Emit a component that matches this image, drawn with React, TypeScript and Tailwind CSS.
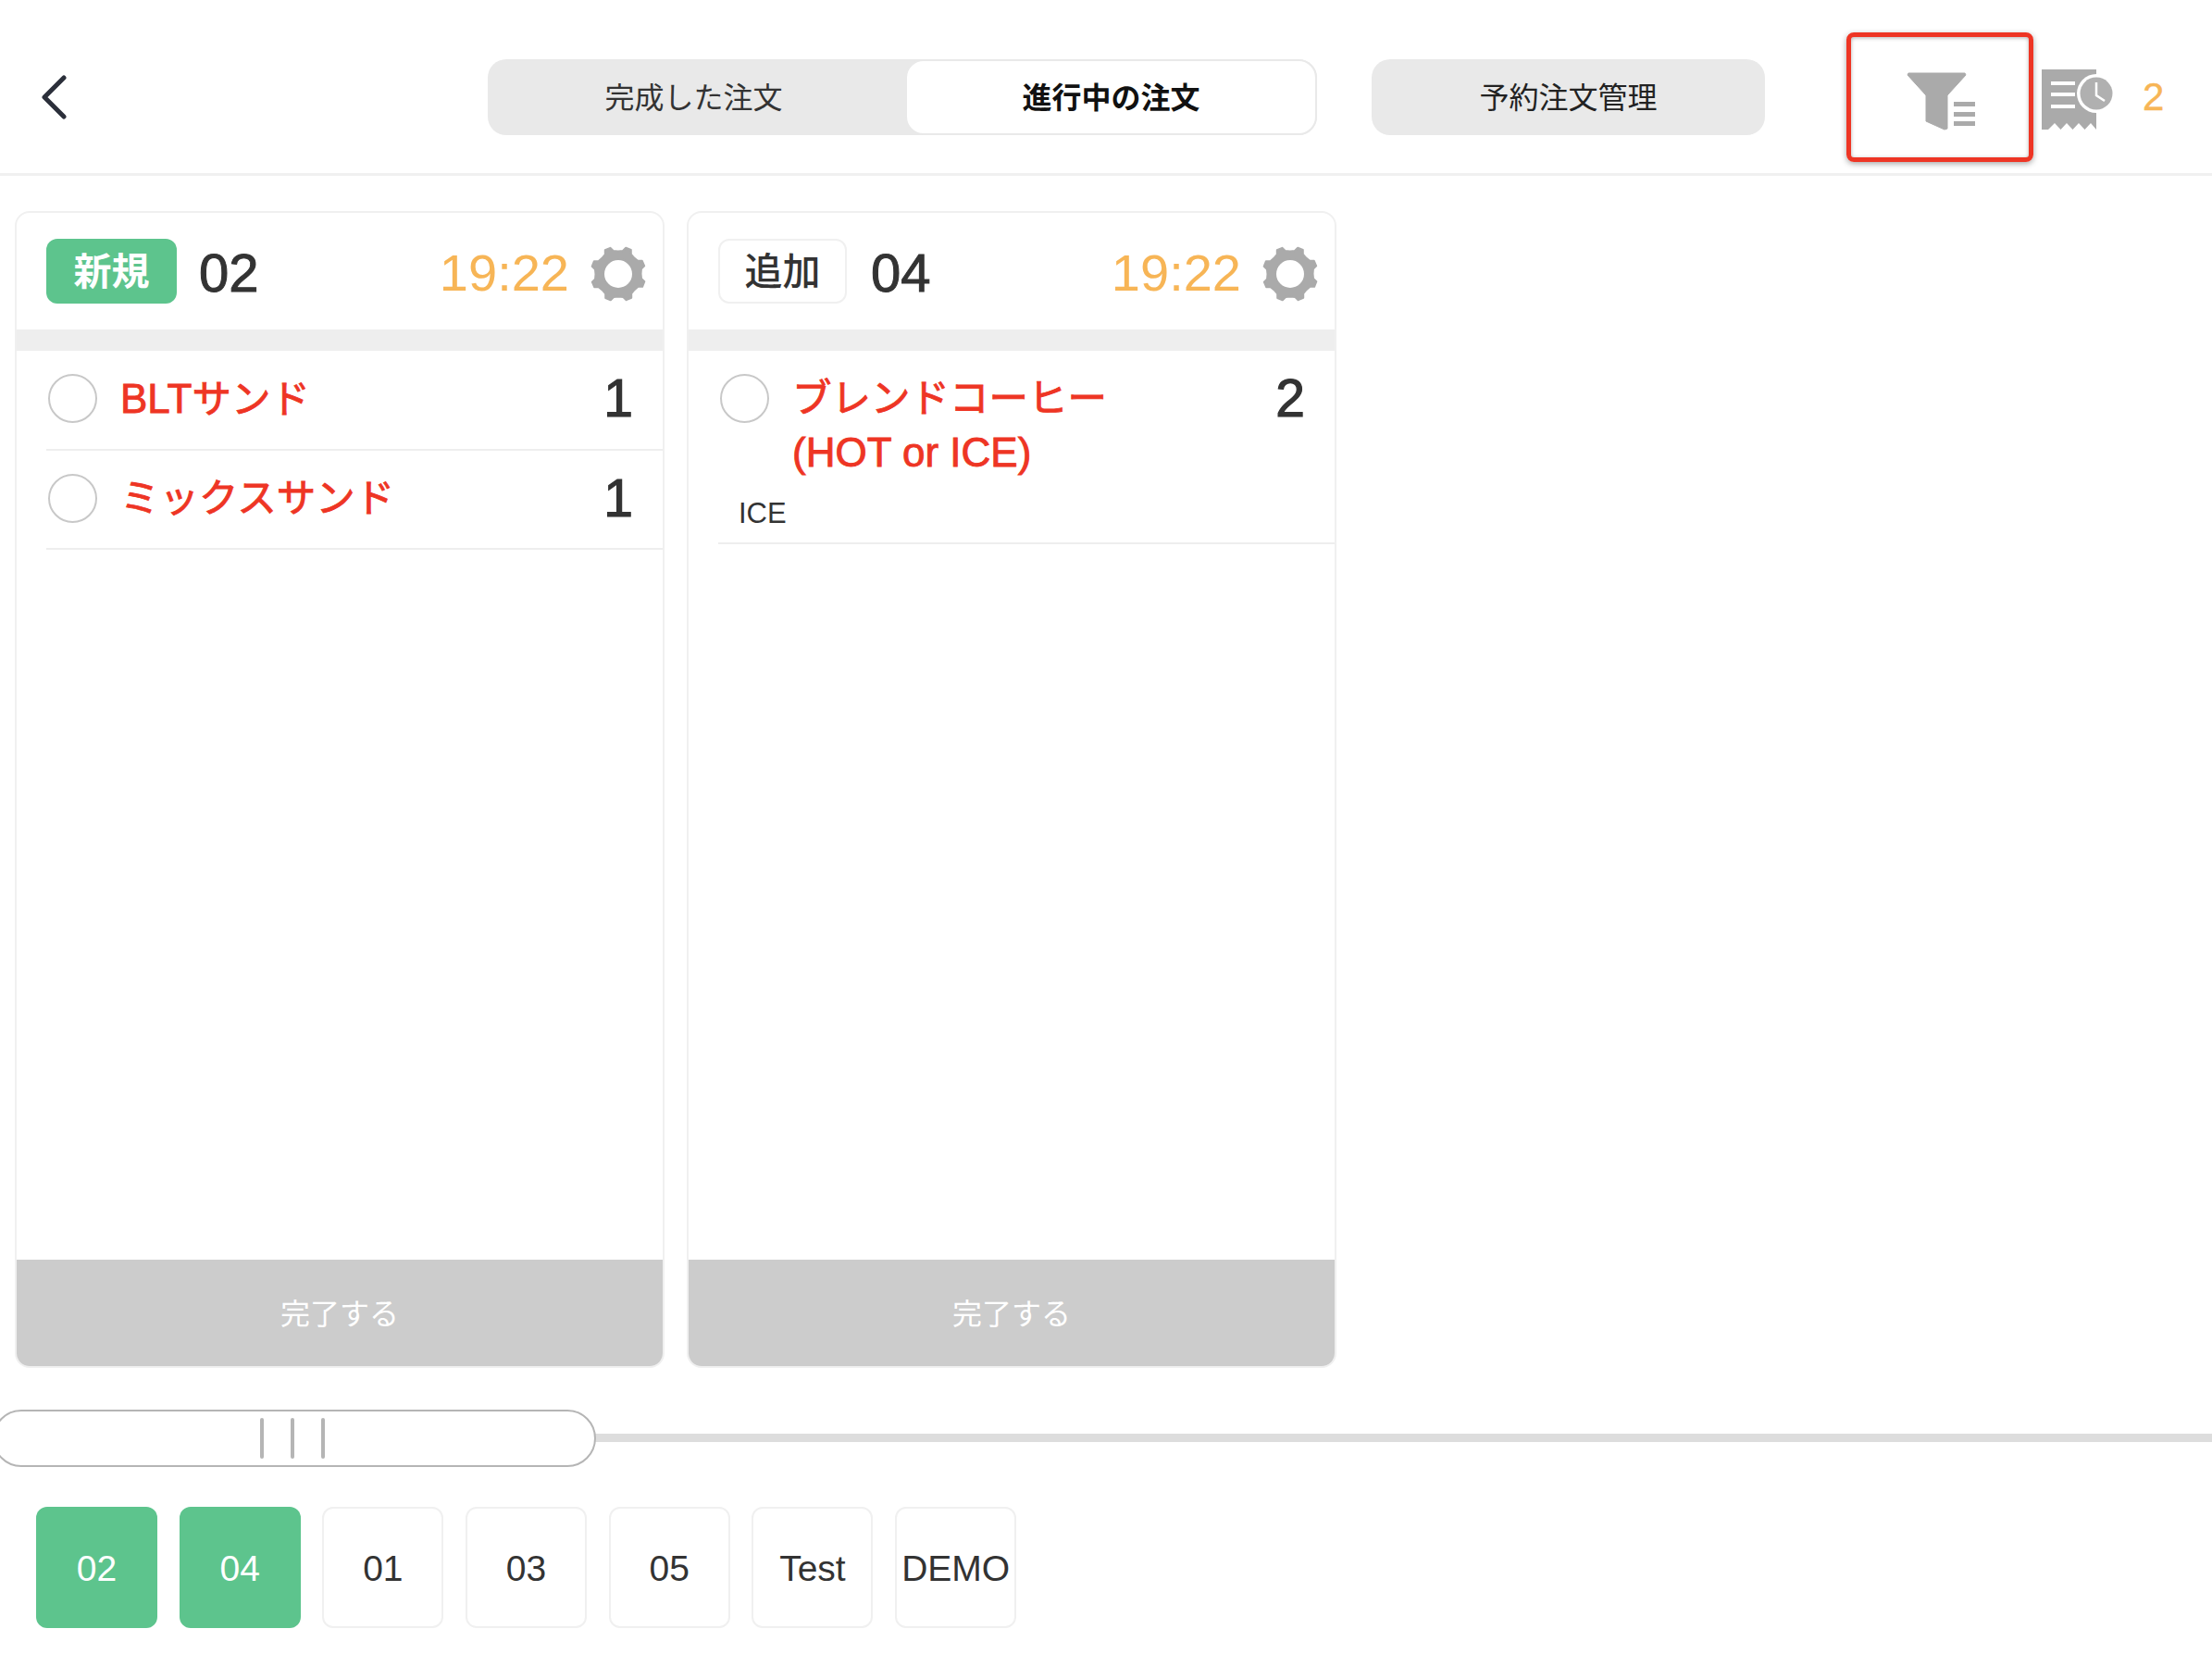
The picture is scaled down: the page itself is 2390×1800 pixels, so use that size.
const gearPath = (() => {
  // 8 teeth cog with a round hole, slightly turned like the original icon
  const cx = 31
  const cy = 31
  const pts: string[] = []
  for (let i = 0; i < 8; i++) {
    const a = ((i * 45 - 68) * Math.PI) / 180
    const step = (Math.PI * 2) / 8
    const list: [number, number][] = [
      [a - step * 0.5, 24.5],
      [a - step * 0.24, 25.5],
      [a - step * 0.13, 29.5],
      [a + step * 0.13, 29.5],
      [a + step * 0.24, 25.5],
    ]
    list.forEach(([t, r]) => {
      pts.push(`${(cx + Math.cos(t) * r).toFixed(2)} ${(cy + Math.sin(t) * r).toFixed(2)}`)
    })
  }
  return `M${pts.join('L')}Z M${cx + 16} ${cy}A16 16 0 1 0 ${cx - 16} ${cy}A16 16 0 1 0 ${cx + 16} ${cy}Z`
})()

function Gear() {
  return (
    <svg viewBox="0 0 62 62" className="w-[62px] h-[62px] mt-[6px] shrink-0">
      <path d={gearPath} fill="#aaaaaa" stroke="#aaaaaa" strokeWidth="2" strokeLinejoin="round" fillRule="evenodd" />
    </svg>
  )
}

function FunnelIcon() {
  return (
    <svg viewBox="0 0 74 63" className="w-[74px] h-[63px]">
      <path d="M2 1H63L64 3L44 25V61L41 62L21 53V25L1 3Z" fill="#aaaaaa" stroke="#aaaaaa" strokeWidth="1" strokeLinejoin="round" />
      <rect x="51" y="32" width="23" height="5" fill="#aaaaaa" />
      <rect x="51" y="43" width="23" height="5" fill="#aaaaaa" />
      <rect x="51" y="53" width="23" height="5" fill="#aaaaaa" />
    </svg>
  )
}

function ReceiptIcon() {
  return (
    <svg viewBox="0 0 78 65" className="w-[78px] h-[65px] shrink-0">
      <path d="M0 0H59V65L53 58L46.5 65L40 58L33.5 65L27 58L20.5 65L14 58L7 65H0Z" fill="#aaaaaa" />
      <rect x="10" y="13" width="26" height="4" fill="#ffffff" />
      <rect x="10" y="25" width="26" height="4" fill="#ffffff" />
      <rect x="10" y="38" width="26" height="4" fill="#ffffff" />
      <circle cx="59" cy="26" r="21" fill="#ffffff" />
      <circle cx="59" cy="26" r="17.5" fill="#b0b0b0" />
      <path d="M59 14V28L68 34" fill="none" stroke="#ffffff" strokeWidth="2.5" />
    </svg>
  )
}

function OrderRow({ name, qty, topping, rowH }: { name: React.ReactNode[]; qty: string; topping?: string; rowH: string }) {
  return (
    <div className={`ml-[32px] pt-[22px] border-b-2 border-[#eeeeee] box-border ${rowH}`}>
      <div className="flex items-start">
        <div className="w-[53px] h-[53px] ml-[2px] mt-[3px] rounded-full border-2 border-[#c8c8c8] shrink-0" />
        <div className="ml-[25px] mt-[1px] flex-1 text-[42.5px] leading-[58px] text-[#ee3524] [-webkit-text-stroke:0.9px_#ee3524]">
          {name.map((line, i) => (
            <div key={i}>{line}</div>
          ))}
        </div>
        <span className="pr-[32px] text-[57px] leading-[58px] text-[#333333] [-webkit-text-stroke:1.2px_#333333]">{qty}</span>
      </div>
      {topping && <div className="ml-[22px] mt-[16px] text-[31px] leading-[40px] text-[#333333]">{topping}</div>}
    </div>
  )
}

function OrderCard({ isNew, table, children }: { isNew: boolean; table: string; children: React.ReactNode }) {
  return (
    <div className="w-[702px] h-[1250px] flex flex-col rounded-[16px] border-2 border-[#f0f0f0] overflow-hidden bg-white">
      <div className="h-[126px] flex items-center pl-[32px] pr-[17px] shrink-0">
        {isNew ? (
          <div className="w-[141px] h-[70px] pt-[3px] rounded-[12px] bg-[#5dc48d] text-white text-[41px] font-bold flex items-center justify-center">新規</div>
        ) : (
          <div className="w-[139px] h-[70px] pt-[3px] rounded-[12px] border-2 border-[#f0f0f0] text-[#333333] text-[41px] font-medium flex items-center justify-center">追加</div>
        )}
        <span className={`${isNew ? 'ml-[24px]' : 'ml-[26px]'} mt-[3px] text-[58px] text-[#333333] [-webkit-text-stroke:1px_#333333]`}>{table}</span>
        <span className="ml-auto mr-[22px] mt-[3px] text-[56px] text-[#f7b556]">19:22</span>
        <Gear />
      </div>
      <div className="h-[23px] bg-[#eeeeee] shrink-0" />
      <div className="flex-1">{children}</div>
      <div className="h-[115px] pt-[3px] bg-[#cccccc] text-white text-[32px] flex items-center justify-center shrink-0">完了する</div>
    </div>
  )
}

const tables = [
  { label: '02', active: true },
  { label: '04', active: true },
  { label: '01', active: false },
  { label: '03', active: false },
  { label: '05', active: false },
  { label: 'Test', active: false },
  { label: 'DEMO', active: false },
]

export default function App() {
  return (
    <div className="w-[2390px] h-[1800px] bg-white overflow-hidden font-['Liberation_Sans','Noto_Sans_CJK_JP',sans-serif]">
      {/* Header */}
      <header className="h-[190px] pt-[22px] flex items-center border-b-[3px] border-[#f0f0f0] box-border">
        <svg viewBox="0 0 30 48" className="ml-[43px] w-[30px] h-[48px] shrink-0">
          <path d="M26 3L5 24L26 45" fill="none" stroke="#2b2f3a" strokeWidth="5" strokeLinecap="round" strokeLinejoin="round" />
        </svg>
        <div className="ml-[454px] w-[896px] h-[82px] rounded-[20px] bg-[#e9e9e9] flex text-[32px] shrink-0">
          <div className="w-[451px] pt-[3px] pr-[6px] flex items-center justify-center text-[#333333]">完成した注文</div>
          <div className="flex-1 pt-[3px] rounded-[20px] bg-white border-2 border-[#e9e9e9] flex items-center justify-center font-bold text-[#111111]">進行中の注文</div>
        </div>
        <div className="ml-[59px] w-[425px] h-[82px] pt-[3px] rounded-[20px] bg-[#e9e9e9] flex items-center justify-center text-[32px] text-[#222222] shrink-0">予約注文管理</div>
        <div className="ml-[88px] w-[202px] h-[140px] rounded-[8px] border-[5px] border-[#ee3524] shadow-[0_2px_6px_rgba(0,0,0,0.35),inset_0_1px_4px_rgba(0,0,0,0.3)] flex items-center justify-center pl-[2px] pt-[10px] shrink-0">
          <FunnelIcon />
        </div>
        <div className="ml-[9px] pt-[6px]">
          <ReceiptIcon />
        </div>
        <span className="ml-[31px] text-[42px] text-[#f7b556] [-webkit-text-stroke:0.4px_#f7b556]">2</span>
      </header>

      {/* Orders */}
      <main className="pt-[38px] pl-[16px] flex gap-[24px]">
        <OrderCard isNew table="02">
          <OrderRow name={[<><span className="text-[44px]">BLT</span>サンド</>]} qty="1" rowH="h-[108px]" />
          <OrderRow name={['ミックスサンド']} qty="1" rowH="h-[107px]" />
        </OrderCard>
        <OrderCard isNew={false} table="04">
          <OrderRow name={['ブレンドコーヒー', <span className="text-[44px]">(HOT or ICE)</span>]} qty="2" topping="ICE" rowH="h-[209px]" />
        </OrderCard>
      </main>

      {/* Slider */}
      <div className="relative h-[62px] mt-[45px]">
        <div className="absolute left-0 right-0 top-[26px] h-[9px] bg-[#dddddd]" />
        <div className="absolute left-[-8px] top-0 w-[652px] h-[62px] pr-[4px] rounded-full border-2 border-[#b5b5b5] bg-white flex items-center justify-center gap-[29px]">
          <div className="w-[4px] h-[44px] rounded-full bg-[#b5b5b5]" />
          <div className="w-[4px] h-[44px] rounded-full bg-[#b5b5b5]" />
          <div className="w-[4px] h-[44px] rounded-full bg-[#b5b5b5]" />
        </div>
      </div>

      {/* Table tabs */}
      <div className="mt-[43px] pl-[39px] flex gap-[23.7px]">
        {tables.map((t) => (
          <div
            key={t.label}
            className={
              t.active
                ? 'w-[131px] h-[131px] pt-[3px] rounded-[12px] bg-[#5dc48d] text-white text-[39px] flex items-center justify-center'
                : 'w-[131px] h-[131px] pt-[3px] rounded-[12px] border-2 border-[#f0f0f0] text-[#333333] text-[39px] flex items-center justify-center'
            }
          >
            {t.label}
          </div>
        ))}
      </div>
    </div>
  )
}
